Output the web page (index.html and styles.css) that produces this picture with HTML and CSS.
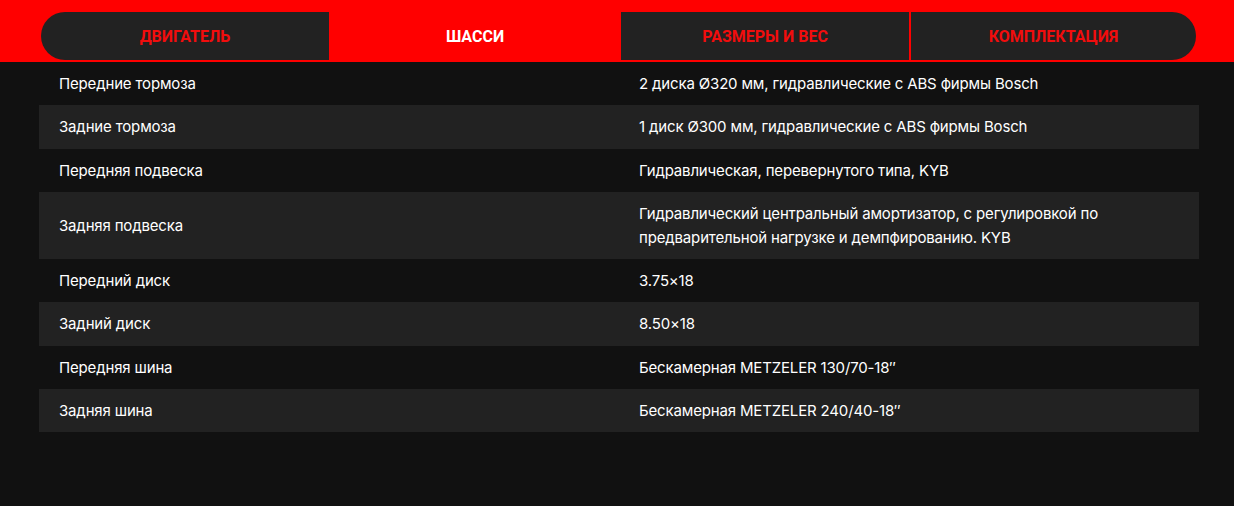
FILE: index.html
```html
<!DOCTYPE html>
<html lang="ru">
<head>
<meta charset="utf-8">
<link rel="stylesheet" href="styles.css">
</head>
<body>
<div class="bar">
  <nav class="tabs">
    <div class="tab tab-first">Двигатель</div>
    <div class="tab tab-active">Шасси</div>
    <div class="tab">Размеры и вес</div>
    <div class="tab tab-last">Комплектация</div>
  </nav>
</div>
<table class="specs">
  <tr><td>Передние тормоза</td><td>2 диска Ø320 мм, гидравлические с ABS фирмы Bosch</td></tr>
  <tr><td>Задние тормоза</td><td>1 диск Ø300 мм, гидравлические с ABS фирмы Bosch</td></tr>
  <tr><td>Передняя подвеска</td><td>Гидравлическая, перевернутого типа, KYB</td></tr>
  <tr><td>Задняя подвеска</td><td>Гидравлический центральный амортизатор, с регулировкой по предварительной нагрузке и демпфированию. KYB</td></tr>
  <tr><td>Передний диск</td><td>3.75×18</td></tr>
  <tr><td>Задний диск</td><td>8.50×18</td></tr>
  <tr><td>Передняя шина</td><td>Бескамерная METZELER 130/70-18″</td></tr>
  <tr><td>Задняя шина</td><td>Бескамерная METZELER 240/40-18″</td></tr>
</table>
</body>
</html>
```
FILE: styles.css
```css
html, body {
  margin: 0;
  padding: 0;
  background: #111111;
  font-family: Inter, "Noto Sans", sans-serif;
  color: #ffffff;
}
.bar {
  background: #ff0000;
  padding: 12px 37px 2px 41px;
  height: 48px;
}
.tabs {
  display: grid;
  grid-template-columns: 288px 290px 288px 286px;
  column-gap: 1px;
  height: 48px;
}
.tab {
  background: #222222;
  color: #f20d0d;
  font-family: Roboto, "Liberation Sans", sans-serif;
  font-weight: 700;
  font-size: 16px;
  text-transform: uppercase;
  display: flex;
  align-items: center;
  justify-content: center;
  padding-top: 1px;
}
.tab-first { border-radius: 24px 0 0 24px; }
.tab-last { border-radius: 0 24px 24px 0; margin-left: 1px; }
.tab-active { background: #ff0000; color: #ffffff; }
.specs {
  margin-left: 39px;
  width: 1160px;
  border-collapse: collapse;
  table-layout: fixed;
  font-size: 15px;
  line-height: 24px;
  letter-spacing: -0.16px;
}
.specs td {
  padding: 10px 20px 9.25px;
  vertical-align: middle;
  width: 50%;
}
.specs tr:nth-child(even) { background: #222222; }
```
